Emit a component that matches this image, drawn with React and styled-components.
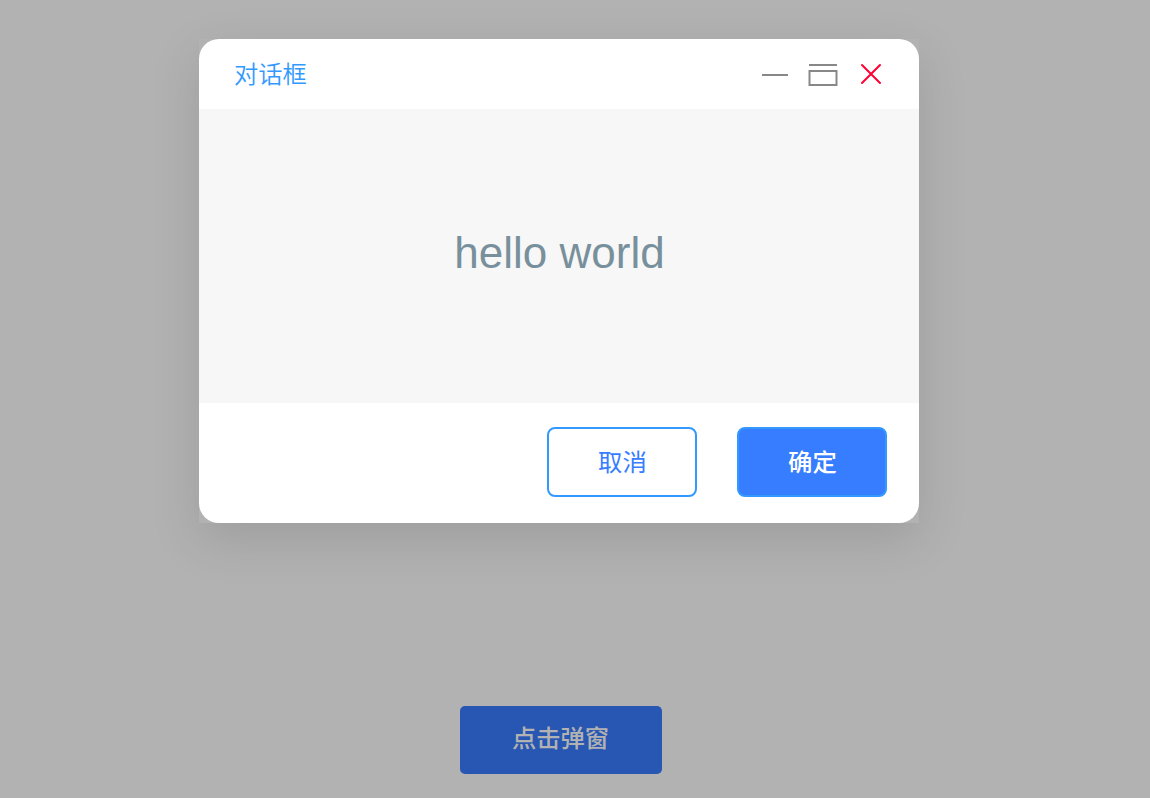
import React from "react";
import styled, { createGlobalStyle } from "styled-components";

const GlobalStyle = createGlobalStyle`
  * { box-sizing: border-box; }
  body {
    margin: 0;
    background: #b2b2b2;
    font-family: "Liberation Sans", "Noto Sans CJK SC", sans-serif;
  }
`;

const Page = styled.main`
  display: flex;
  flex-direction: column;
  width: 1150px;
  height: 798px;
  padding: 39px 0 0 199px;
  overflow: hidden;
  background: #b2b2b2;
`;

const DialogShadow = styled.div`
  width: 720px;
  height: 484px;
  box-shadow: 0 16px 48px rgba(0, 0, 0, 0.12);
`;

const Dialog = styled.section`
  display: flex;
  flex-direction: column;
  height: 100%;
  overflow: hidden;
  border-radius: 20px;
  background: #fff;
`;

const Header = styled.header`
  display: flex;
  align-items: center;
  justify-content: space-between;
  height: 70px;
  padding: 0 32px 0 35px;
`;

const Title = styled.h1`
  margin: 0;
  padding-bottom: 3px;
  font-size: 24.3px;
  line-height: 36px;
  font-weight: 350;
  font-family: "Noto Sans CJK SC", sans-serif;
  color: #3399ff;
`;

const Controls = styled.div`
  display: flex;
  gap: 16px;
`;

const Control = styled.button`
  display: block;
  width: 32px;
  height: 32px;
  padding: 0;
  border: 0;
  background: none;
  color: ${(p) => (p.$danger ? "#ff0033" : "#888")};

  svg {
    display: block;
    fill: none;
    stroke: currentColor;
    stroke-width: 2;
    stroke-linecap: ${(p) => (p.$danger ? "round" : "butt")};
  }
`;

const Body = styled.div`
  display: flex;
  align-items: center;
  justify-content: center;
  height: 294px;
  padding: 0 0 6px 1px;
  background: #f7f7f7;
  color: #78909c;
  font-size: 44px;
`;

const Footer = styled.footer`
  display: flex;
  justify-content: flex-end;
  gap: 40px;
  height: 120px;
  padding: 24px 32px 26px;
`;

const Button = styled.button`
  width: 150px;
  height: 70px;
  padding: 0 0 3px 1px;
  border: 2px solid #3399ff;
  border-radius: 8px;
  background: ${(p) => (p.$primary ? "#377dff" : "#fff")};
  color: ${(p) => (p.$primary ? "#fff" : "#377dff")};
  font: ${(p) => (p.$primary ? 500 : 400)} 24.4px/36px "Noto Sans CJK SC", sans-serif;
`;

const Trigger = styled.button`
  width: 202px;
  height: 68px;
  margin: 183px 0 0 261px;
  padding: 0 1px 6px 0;
  border: 0;
  border-radius: 5px;
  background: #2757b3;
  color: #b2b2b2;
  font: 500 24.3px/36px "Noto Sans CJK SC", sans-serif;
`;

export default function App() {
  return (
    <>
      <GlobalStyle />
      <Page>
        <DialogShadow>
          <Dialog role="dialog" aria-labelledby="dialog-title">
            <Header>
              <Title id="dialog-title">对话框</Title>
              <Controls>
                <Control>
                  <svg width="32" height="32" viewBox="0 0 32 32">
                    <path d="M3 17H29" />
                  </svg>
                </Control>
                <Control>
                  <svg width="32" height="32" viewBox="0 0 32 32">
                    <path d="M2 7H30M2.5 13H29.5V27H2.5Z" />
                  </svg>
                </Control>
                <Control $danger>
                  <svg width="32" height="32" viewBox="0 0 32 32">
                    <path d="M7 7L25 25M25 7L7 25" />
                  </svg>
                </Control>
              </Controls>
            </Header>
            <Body>hello world</Body>
            <Footer>
              <Button>取消</Button>
              <Button $primary>确定</Button>
            </Footer>
          </Dialog>
        </DialogShadow>
        <Trigger>点击弹窗</Trigger>
      </Page>
    </>
  );
}
